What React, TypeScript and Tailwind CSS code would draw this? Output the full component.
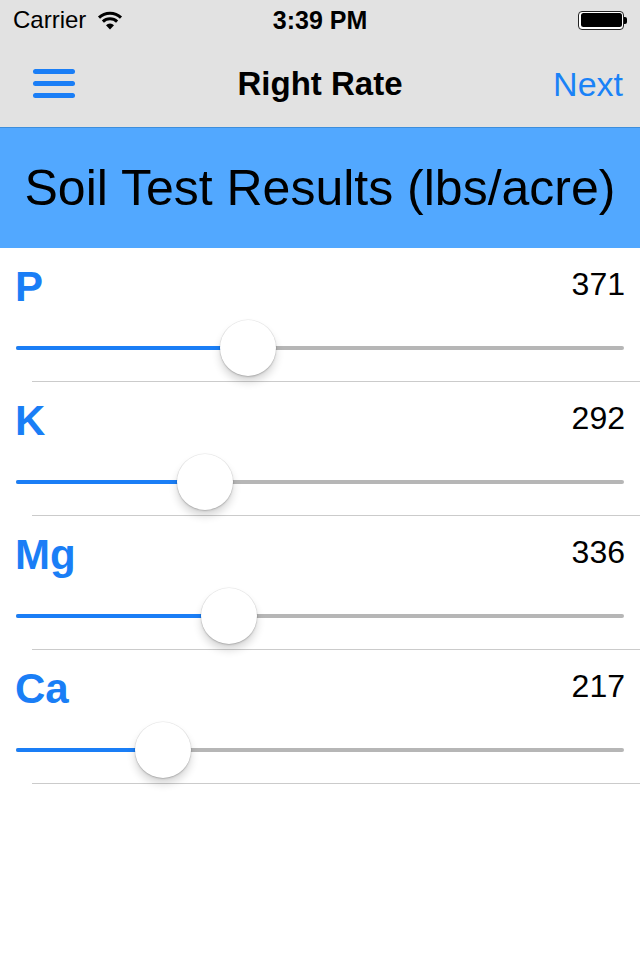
import React from 'react';

// Soil test sliders — iOS-style screen, 640x960 @2x.

type Nutrient = { label: string; value: number; thumb: number };

const NUTRIENTS: Nutrient[] = [
  { label: 'P', value: 371, thumb: 248 },
  { label: 'K', value: 292, thumb: 205 },
  { label: 'Mg', value: 336, thumb: 229 },
  { label: 'Ca', value: 217, thumb: 163 },
];

const WifiIcon = () => (
  <svg width="26" height="19" viewBox="0 0 26 19" className="block">
    <path d="M13 18.5 L9 14.2 A5.8 5.8 0 0 1 17 14.2 Z" fill="#000" />
    <path
      d="M5.9 10.7 A10.2 10.2 0 0 1 20.1 10.7"
      fill="none"
      stroke="#000"
      strokeWidth="3"
    />
    <path
      d="M2 6.6 A15.8 15.8 0 0 1 24 6.6"
      fill="none"
      stroke="#000"
      strokeWidth="3"
    />
  </svg>
);

const Battery = () => (
  <div className="flex items-center">
    <div className="w-[46px] h-[19px] rounded-[4px] border border-[#222] p-[1.5px] bg-white">
      <div className="w-full h-full rounded-[2.5px] bg-black" />
    </div>
    <div className="w-[3px] h-[7px] rounded-r-[2px] bg-black" />
  </div>
);

const Slider = ({ thumb }: { thumb: number }) => (
  // thumb = x centre of the knob in page pixels; container starts at x=16
  <div className="relative h-[56px] mx-[16px]">
    <div className="absolute left-0 right-0 top-[26px] h-[4px] rounded-full bg-[#b6b6b6]" />
    <div
      className="absolute left-0 top-[26px] h-[4px] rounded-l-full bg-[#1a7ef6]"
      style={{ width: thumb - 16 }}
    />
    <div
      className="absolute top-0 w-[56px] h-[56px] rounded-full bg-white shadow-[0_6px_8px_rgba(0,0,0,0.16),0_1px_2px_rgba(0,0,0,0.18),0_0_0_0.5px_rgba(0,0,0,0.08)]"
      style={{ left: thumb - 16 - 28 }}
    />
  </div>
);

const Row = ({ n }: { n: Nutrient }) => (
  <div>
    <div className="flex items-start justify-between pt-[18px] pl-[15px] pr-[15px]">
      <span className="text-[42px] leading-none h-[42px] font-bold text-[#1a7ef6]">{n.label}</span>
      <span className="text-[32px] leading-none mt-[2px] text-black">{n.value}</span>
    </div>
    <div className="mt-[12px]">
      <Slider thumb={n.thumb} />
    </div>
    <div className="mt-[5px] ml-[32px] h-px bg-[#cbcbcb]" />
  </div>
);

export default function App() {
  return (
    <div
      className="w-[640px] h-[960px] bg-white overflow-hidden"
      style={{ fontFamily: '"Liberation Sans", Arial, sans-serif' }}
    >
      {/* status bar + nav bar */}
      <div className="bg-[#e2e2e2]">
        <div className="h-[40px] flex items-center justify-between px-[13px] relative">
          <div className="flex items-center gap-[11px]">
            <span className="text-[24px] text-black leading-none">Carrier</span>
            <WifiIcon />
          </div>
          <span className="absolute left-1/2 -translate-x-1/2 text-[25px] font-bold text-black leading-none">
            3:39 PM
          </span>
          <Battery />
        </div>
        <div className="h-[88px] flex items-center justify-between relative border-b border-[#3d8edc]">
          <div className="pl-[33px] flex flex-col gap-[7px]">
            <div className="w-[42px] h-[5px] rounded-full bg-[#1a7ef6]" />
            <div className="w-[42px] h-[5px] rounded-full bg-[#1a7ef6]" />
            <div className="w-[42px] h-[5px] rounded-full bg-[#1a7ef6]" />
          </div>
          <span className="absolute left-1/2 -translate-x-1/2 text-[33px] font-bold text-black leading-none">
            Right Rate
          </span>
          <span className="pr-[17px] text-[34px] text-[#1a82f7] leading-none">Next</span>
        </div>
      </div>

      {/* section header */}
      <div className="h-[120px] bg-[#52a8ff] flex items-center justify-center">
        <span className="text-[50px] text-black leading-none">Soil Test Results (lbs/acre)</span>
      </div>

      {NUTRIENTS.map((n) => (
        <Row key={n.label} n={n} />
      ))}
    </div>
  );
}
